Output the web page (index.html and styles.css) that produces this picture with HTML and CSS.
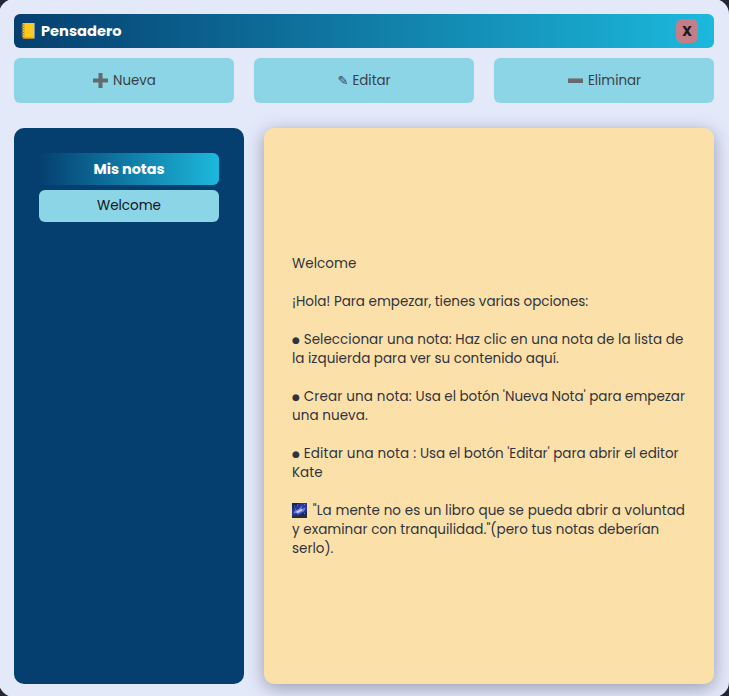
FILE: index.html
```html
<!DOCTYPE html>
<html lang="es">
<head>
<meta charset="utf-8">
<title>Pensadero</title>
<link rel="stylesheet" href="styles.css">
</head>
<body>
<div class="window">
  <header class="titlebar">
    <svg class="book" viewBox="0 0 16 18"><path d="M3 1h10.500v15.500H3z" fill="#e9e5d5"/><path d="M1.500 1.500Q1.500 1 2.500 1H13v14.500H1.500z" fill="#ffc91f"/><path d="M1.500 15.500H13V17H3q-1.500 0-1.500-1.500z" fill="#b98a24"/><path d="M3.500 1v14.500" stroke="#dca51c" stroke-width=".7"/><path d="M.5 3h2.500M.5 5.500h2.500M.5 8h2.500M.5 10.500h2.500M.5 13h2.500" stroke="#7c7b62" stroke-width="1"/></svg>
    <h1 class="title">Pensadero</h1>
    <button class="close">X</button>
  </header>
  <nav class="toolbar">
    <button class="action"><svg class="sign" viewBox="0 0 15 15"><path d="M5.500 0h4v5.500H15v4H9.500V15h-4V9.500H0v-4h5.500z" fill="#656a6e"/></svg><span>Nueva</span></button>
    <button class="action"><span class="pencil">✎</span><span>Editar</span></button>
    <button class="action"><svg class="sign" viewBox="0 0 15 15"><path d="M0 5.500h15v4.500H0z" fill="#656a6e"/><path d="M0 5.800h15" stroke="#858b8e" stroke-width=".6"/></svg><span>Eliminar</span></button>
  </nav>
  <main class="content">
    <aside class="sidebar">
      <h2 class="list-title">Mis notas</h2>
      <button class="note-item">Welcome</button>
    </aside>
    <article class="note">
      <p><span>Welcome</span></p>
      <p><span class="tight">¡Hola! Para empezar, tienes varias opciones:</span></p>
      <p><span><i class="dot">●</i> Seleccionar una nota: Haz clic en una nota de la lista de</span><span>la izquierda para ver su contenido aquí.</span></p>
      <p><span class="mark"><i class="dot">●</i> Crear una nota: <b>Usa el botón 'Nueva Nota' para empezar</b></span><span class="loose">una nueva.</span></p>
      <p><span class="mark"><i class="dot">●</i> Editar una nota : <b>Usa el botón 'Editar' para abrir el editor</b></span><span>Kate</span></p>
      <p><span class="loose"><svg class="galaxy" viewBox="0 0 15 15"><path d="M0 0h15v15H0z" fill="#26369b"/><path d="M0 0h8L0 6zM15 8v5H7z" fill="#182457"/><path d="M1.500 10.500Q2 7 6 6.500L11 2l-2 4 4.500-1.500Q13 9 9 9.500L5 12l1-2.500z" fill="#6f7de0"/><path d="M4.500 9.500l5.500-3" stroke="#d3d2f7" stroke-width="1.500"/><path d="M2 3h1M5 2h1M12 1.500h1M12 10.500h1M3 6h1" stroke="#7386e8"/><path d="M0 13l4-.7 4 .4 7-1V15H0z" fill="#28302f"/></svg> "La mente no es un libro que se pueda abrir a voluntad</span><span class="open">y examinar con tranquilidad."(pero tus notas deberían</span><span>serlo).</span></p>
    </article>
  </main>
</div>
</body>
</html>
```
FILE: styles.css
```css
* { box-sizing: border-box; }
html { overflow: hidden; background: #252733; }
body { margin: 0; height: 696px; overflow: hidden; font-family: Poppins, Inter, sans-serif; font-size: 13.5px; }
button { border: 0; padding: 0; font: inherit; }
h1, h2, p { margin: 0; }
.window { width: 730px; height: 698px; margin: -1px 0 0 -1px; padding: 15px 15px 13px; border-radius: 15px; background: #e4e9fa; display: flex; flex-direction: column; }
.titlebar { height: 34px; flex: none; border-radius: 6px; padding: 0 16px 0 7px; display: flex; align-items: center; background: linear-gradient(90deg, #053f6f, #1cb9dd); }
.book { width: 16px; height: 18px; margin: 0 4px 1px 0; }
.title { flex: 1; color: #fff; font-size: 14.6px; font-weight: 700; line-height: 20px; }
.close { width: 22px; height: 24px; border-radius: 6px; background: #c37e87; color: #171a20; font-size: 14px; font-weight: 700; }
.toolbar { display: grid; grid-template-columns: repeat(3, 1fr); gap: 20px; margin-top: 10px; flex: none; }
.action { height: 45px; border-radius: 6px; background: #8cd5e6; color: #3b4045; font-size: 13.4px; display: flex; align-items: center; justify-content: center; gap: 5px; }
.sign { width: 15px; height: 15px; margin-left: 1px; }
.pencil { width: 10px; font: 13px "DejaVu Sans", sans-serif; }
.content { flex: 1; margin-top: 25px; display: grid; grid-template-columns: 230px 450px; gap: 20px; }
.sidebar { border-radius: 10px; background: #053f6f; padding: 25px; display: flex; flex-direction: column; gap: 5px; position: relative; z-index: 1; }
.list-title { height: 32px; border-radius: 6px; background: linear-gradient(90deg, #053f6f, #1cb9dd); color: #fff; font-size: 14.4px; line-height: 32px; text-align: center; }
.note-item { height: 32px; padding-bottom: 1px; border-radius: 6px; background: #8cd5e6; color: #101416; }
.note { border-radius: 10px; background: #fce0a9; color: #2e3440; box-shadow: 0 4px 18px rgba(30, 40, 60, .4); padding: 0 28px; display: flex; flex-direction: column; justify-content: center; gap: 19px; line-height: 19px; }
.note p { display: flex; flex-direction: column; align-items: flex-start; }
.note span { white-space: pre; height: 19px; }
.note b { font-weight: 400; letter-spacing: -.035px; }
.note .tight { letter-spacing: -.02px; }
.note .open { letter-spacing: .03px; }
.note .loose { letter-spacing: .065px; }
.note .mark { letter-spacing: .15px; }
.note p > span:first-child:not(.tight):not(.loose):not(.mark) { letter-spacing: .05px; }
.dot { display: inline-block; width: 8px; font: 9px "DejaVu Sans", sans-serif; letter-spacing: 0; position: relative; top: -1.5px; }
.galaxy { width: 15px; height: 15px; margin-right: 2px; vertical-align: -3px; }
```
